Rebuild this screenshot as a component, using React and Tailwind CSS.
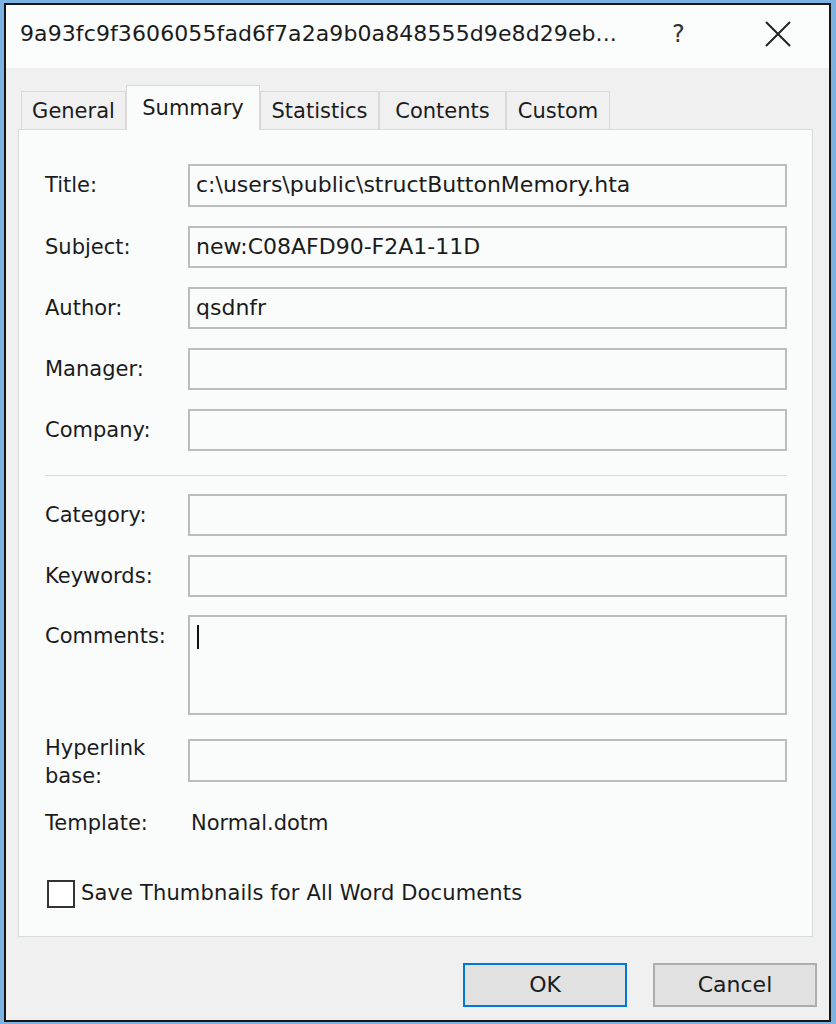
import React from 'react'

const font = { fontFamily: '"DejaVu Sans", "Liberation Sans", sans-serif' }

const Field = ({ label, value, mt, h = 'h-[42px]' }) => (
  <div className={`flex items-start ${mt}`}>
    <div className="w-[143px] shrink-0 leading-[42px]">{label}</div>
    <div className={`flex-1 ${h} border-2 border-[#bcbcbc] bg-[#fafcfc] pl-[6px] leading-[38px] text-[22px]`}>
      {value}
    </div>
  </div>
)

const Tab = ({ children, active, w }) =>
  active ? (
    <div className={`${w} h-[45px] -mb-px relative z-10 border border-b-0 border-[#d9d9d9] bg-[#fafcfc] flex items-start justify-center pt-[7px]`}>
      {children}
    </div>
  ) : (
    <div className={`${w} h-[38px] border border-b-0 border-[#d9d9d9] bg-[#f0f0f0] flex items-center justify-center pt-[3px]`}>
      {children}
    </div>
  )

export default function App() {
  return (
    <div className="w-[836px] h-[1024px] bg-[#7db3e3] pl-[4px] pt-[3px] pr-[5px] pb-[2px] text-[#1b1b1b] text-[21px]" style={font}>
      <div className="h-full border-2 border-[#151515] flex flex-col bg-[#f0f0f0]">
        {/* title bar */}
        <div className="h-[63px] bg-[#fbfcfc] flex items-center pl-[14px] pb-[6px] shrink-0">
          <span className="text-[22px] w-[652px] tracking-[0.1px]">9a93fc9f3606055fad6f7a2a9b0a848555d9e8d29eb...</span>
          <span className="text-[24px] w-[92px] text-[#333]">?</span>
          <svg width="28" height="28" viewBox="0 0 28 28" className="mt-[1px]">
            <path d="M2 2 L26 26 M26 2 L2 26" stroke="#222" strokeWidth="2" fill="none" />
          </svg>
        </div>

        <div className="flex-1 px-[12px] pt-[17px] flex flex-col">
          {/* tabs */}
          <div className="flex items-end pl-[3px]">
            <Tab w="w-[105px]">General</Tab>
            <Tab w="w-[134px]" active>Summary</Tab>
            <Tab w="w-[119px]">Statistics</Tab>
            <Tab w="w-[127px]">Contents</Tab>
            <Tab w="w-[104px]">Custom</Tab>
          </div>

          {/* panel */}
          <div className="w-[795px] h-[808px] border border-[#d9d9d9] bg-[#fafcfc] pl-[26px] pr-[25px] pt-[34px] flex flex-col">
            <Field label="Title:" value="c:\users\public\structButtonMemory.hta" h="h-[43px]" />
            <Field label="Subject:" value="new:C08AFD90-F2A1-11D" mt="mt-[19px]" />
            <Field label="Author:" value="qsdnfr" mt="mt-[19px]" />
            <Field label="Manager:" mt="mt-[19px]" />
            <Field label="Company:" mt="mt-[19px]" />

            <div className="mt-[24px] border-t border-[#dcdcdc]" />

            <Field label="Category:" mt="mt-[18px]" />
            <Field label="Keywords:" mt="mt-[19px]" />
            <div className="flex items-start mt-[18px]">
              <div className="w-[143px] shrink-0 leading-[42px]">Comments:</div>
              <div className="flex-1 h-[100px] border-2 border-[#bcbcbc] bg-[#fafcfc] pl-[7px] pt-[8px]">
                <div className="w-[2px] h-[24px] bg-[#111]" />
              </div>
            </div>
            <div className="flex items-start mt-[24px]">
              <div className="w-[143px] shrink-0 leading-[28px] -mt-[5px]">
                Hyperlink
                <br />
                base:
              </div>
              <div className="flex-1 h-[43px] border-2 border-[#bcbcbc] bg-[#fafcfc]" />
            </div>
            <div className="flex items-center h-[40px] mt-[14px]">
              <div className="w-[146px] shrink-0">Template:</div>
              <div>Normal.dotm</div>
            </div>
            <label className="flex items-center mt-[34px] ml-[2px] gap-[6px]">
              <span className="w-[28px] h-[28px] border-2 border-[#333] bg-white" />
              <span className="tracking-[0.15px]">Save Thumbnails for All Word Documents</span>
            </label>
          </div>

          {/* buttons */}
          <div className="flex justify-end gap-[26px] mt-[26px] text-[22px]">
            <button className="w-[164px] h-[44px] border-2 border-[#0078d7] bg-[#e1e1e1] leading-none">OK</button>
            <button className="w-[164px] h-[44px] border-2 border-[#adadad] bg-[#e1e1e1] leading-none">Cancel</button>
          </div>
        </div>
      </div>
    </div>
  )
}
